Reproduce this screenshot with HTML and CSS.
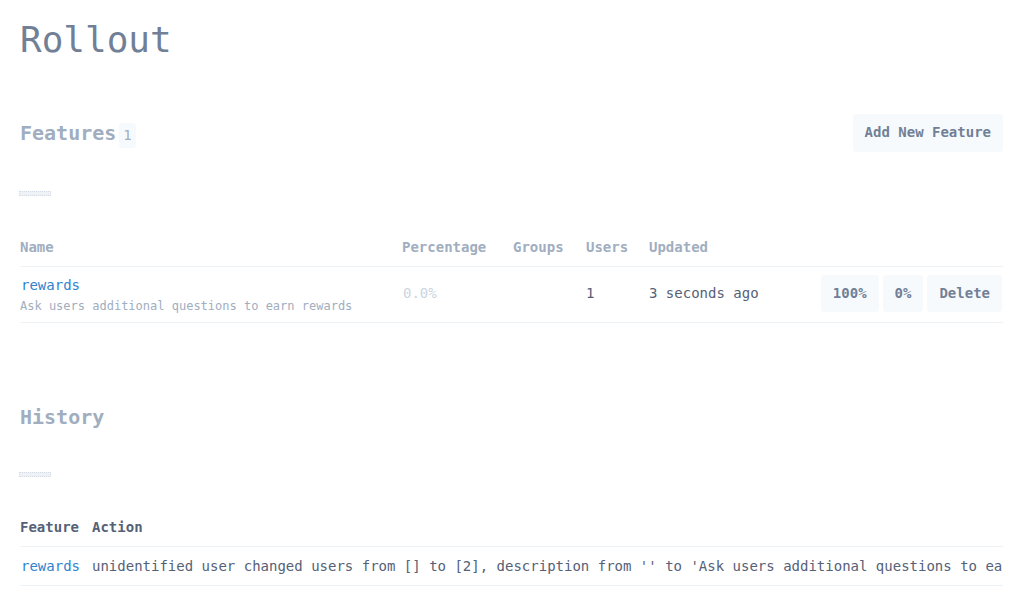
FILE: index.html
```html
<!DOCTYPE html>
<html>
<head>
<meta charset="utf-8">
<title>Rollout</title>
<link rel="stylesheet" href="styles.css">
</head>
<body>
<div class="page">
  <h1 class="title">Rollout</h1>

  <section class="features">
    <div class="section-head">
      <div class="heading-group">
        <h2 class="heading">Features</h2>
        <span class="badge">1</span>
      </div>
      <button class="btn">Add New Feature</button>
    </div>
    <div class="loader"></div>
    <table class="ftable">
      <colgroup>
        <col class="c-name"><col class="c-pct"><col class="c-groups"><col class="c-users"><col class="c-updated"><col class="c-actions">
      </colgroup>
      <thead>
        <tr><th>Name</th><th>Percentage</th><th>Groups</th><th>Users</th><th>Updated</th><th></th></tr>
      </thead>
      <tbody>
        <tr>
          <td class="name-cell">
            <a class="link" href="#">rewards</a>
            <div class="desc">Ask users additional questions to earn rewards</div>
          </td>
          <td class="muted">0.0%</td>
          <td></td>
          <td class="dark">1</td>
          <td class="dark">3 seconds ago</td>
          <td class="actions">
            <div class="btn-row">
              <button class="btn">100%</button>
              <button class="btn">0%</button>
              <button class="btn">Delete</button>
            </div>
          </td>
        </tr>
      </tbody>
    </table>
  </section>

  <section class="history">
    <h2 class="heading">History</h2>
    <div class="loader"></div>
    <table class="htable">
      <colgroup><col class="c-feature"><col></colgroup>
      <thead>
        <tr><th>Feature</th><th>Action</th></tr>
      </thead>
      <tbody>
        <tr>
          <td><a class="link" href="#">rewards</a></td>
          <td class="dark nowrap">unidentified user changed users from [] to [2], description from '' to 'Ask users additional questions to earn rewards'</td>
        </tr>
      </tbody>
    </table>
  </section>
</div>
</body>
</html>
```

FILE: styles.css
```css
* { box-sizing: border-box; }
html, body { margin: 0; padding: 0; background: #fff; }
body {
  font-family: "DejaVu Sans Mono", "Liberation Mono", monospace;
  color: #556177;
}
.page {
  width: 1025px;
  padding: 0 22px 0 20px;
}
.title {
  margin: 18px 0 0;
  font-size: 36px;
  line-height: 44px;
  font-weight: normal;
  color: #718096;
}
.features { margin-top: 52px; }
.section-head {
  display: flex;
  justify-content: space-between;
  align-items: center;
  height: 38px;
}
.heading-group {
  display: flex;
  align-items: flex-start;
  height: 38px;
  padding-top: 5px;
}
.heading {
  margin: 0;
  font-size: 20px;
  line-height: 28px;
  font-weight: bold;
  color: #a0aec0;
}
.badge {
  margin: 4px 0 0 3px;
  padding: 4px 4px;
  font-size: 14px;
  line-height: 17px;
  color: #a0aec0;
  background: #f7fafc;
  border-radius: 3px;
}
.btn {
  font-family: inherit;
  font-size: 14px;
  font-weight: bold;
  line-height: 17px;
  padding: 10px 12px;
  color: #718096;
  background: #f7fafc;
  border: 0;
  border-radius: 3px;
}
.section-head .btn { padding: 10px 12px 11px; }
.loader {
  width: 32px;
  height: 5px;
  margin-top: 39px;
  margin-left: -1px;
  border: 1px dotted #d5dce6;
  background: #eef2f7;
}
table {
  border-collapse: collapse;
  table-layout: fixed;
  width: 983px;
}
.ftable { margin-top: 33px; }
th {
  text-align: left;
  padding: 10px 0;
  font-size: 14px;
  line-height: 17px;
  font-weight: bold;
  color: #a0aec0;
  border-bottom: 1px solid #edf2f7;
}
td {
  padding: 8px 0 10px;
  font-size: 14px;
  line-height: 17px;
  vertical-align: middle;
  border-bottom: 1px solid #edf2f7;
}
.ftable td.name-cell {
  vertical-align: top;
  padding: 10px 0 0;
}
.c-name { width: 382px; }
.c-pct { width: 111px; }
.c-groups { width: 73px; }
.c-users { width: 63px; }
.c-updated { width: 164px; }
.c-actions { width: 190px; }
.link {
  display: block;
  color: #3182ce;
  text-decoration: none;
  font-size: 14px;
  line-height: 17px;
  padding-left: 1px;
}
.desc {
  margin-top: 4px;
  font-size: 12px;
  line-height: 16px;
  color: #a0aec0;
}
.muted { color: #cbd5e0; padding-left: 1px; }
.dark { color: #556177; }
.actions { text-align: right; }
.btn-row {
  display: flex;
  justify-content: flex-end;
  gap: 4px;
  padding-right: 1px;
}
.history { margin-top: 80px; }
.history .loader { margin-top: 41px; }
.htable { margin-top: 32px; }
.htable th { color: #556177; }
.htable td { padding: 11px 0 10px; }
.c-feature { width: 72px; }
.nowrap {
  white-space: nowrap;
  overflow: hidden;
}
```
